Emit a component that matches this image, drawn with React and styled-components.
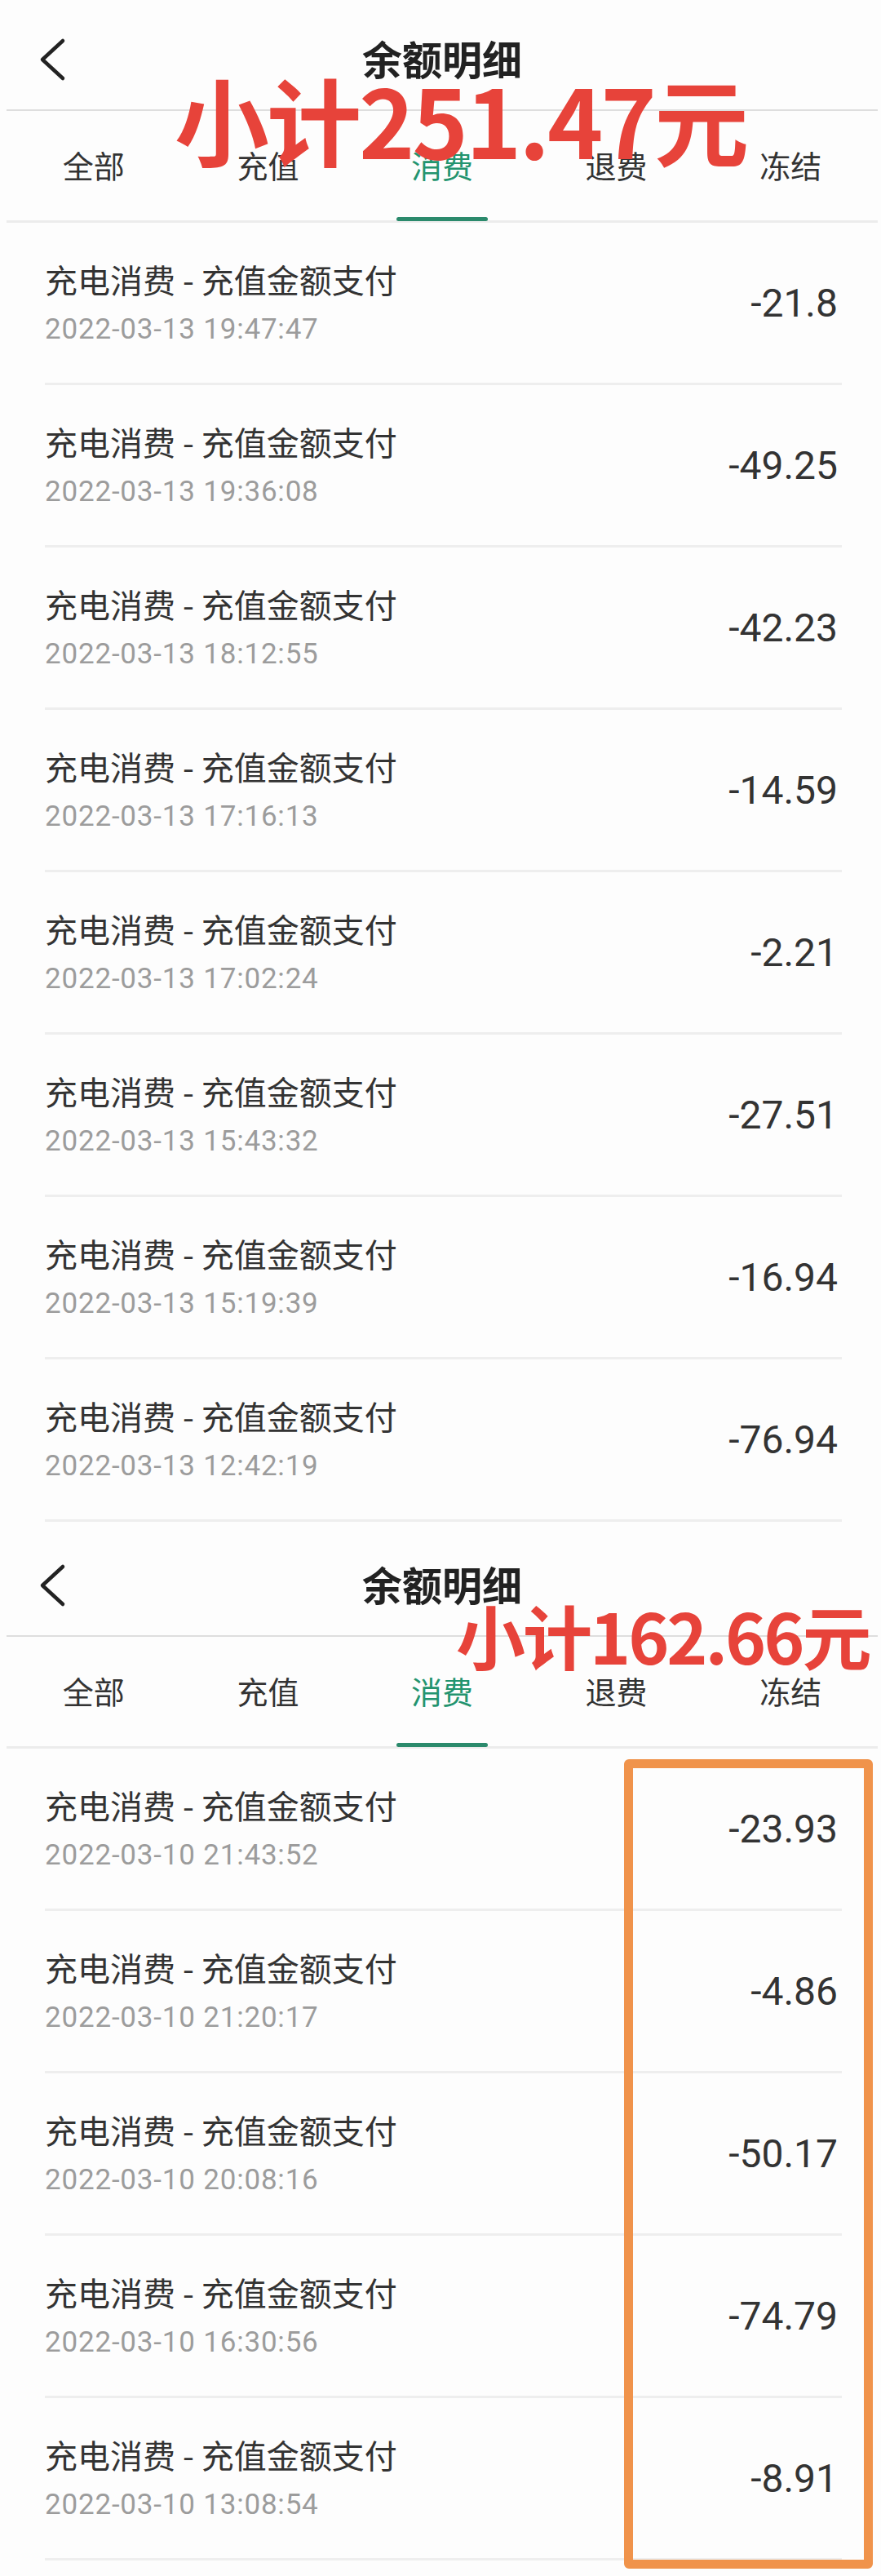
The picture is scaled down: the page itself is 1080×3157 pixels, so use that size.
import styled, { createGlobalStyle } from 'styled-components';

const GlobalStyle = createGlobalStyle`
    html, body {
        margin: 0;
        padding: 0;
        background: #fdfdfd;
    }
    * {
        box-sizing: border-box;
    }
`;

const CJK = `"Noto Sans CJK SC", "Noto Sans", sans-serif`;
const NUM = `Roboto, "Noto Sans CJK SC", sans-serif`;

const Page = styled.div`
    width: 1080px;
    min-height: 3157px;
    background: #fdfdfd;
    font-family: ${CJK};
    padding-bottom: 19px;
`;

const Panel = styled.section`
    position: relative;
    padding-bottom: ${({ $gap }) => $gap || 0}px;
`;

const NavBar = styled.header`
    position: relative;
    height: 136px;
    display: flex;
    align-items: center;
    justify-content: center;
    margin: 0 4px 0 8px;
    border-bottom: 2px solid #dedede;
`;

const BackBtn = styled.button`
    position: absolute;
    left: 40px;
    top: 45px;
    width: 34px;
    height: 56px;
    padding: 0;
    border: 0;
    background: none;
    display: flex;
`;

const NavTitle = styled.h1`
    margin: 6px 0 0;
    font-size: 49px;
    font-weight: 700;
    color: #222;
    line-height: 1;
`;

const TabBar = styled.nav`
    display: grid;
    grid-template-columns: repeat(5, 1fr);
    height: 137px;
    margin: 0 4px 0 8px;
    border-bottom: 3px solid #ececec;
`;

const Tab = styled.div`
    position: relative;
    display: flex;
    align-items: center;
    justify-content: center;
    padding-bottom: 3px;
    font-size: 38px;
    color: ${({ $active }) => ($active ? '#23946f' : '#333')};

    &::after {
        content: '';
        display: ${({ $active }) => ($active ? 'block' : 'none')};
        position: absolute;
        left: 50%;
        bottom: -1px;
        width: 112px;
        height: 5px;
        margin-left: -56px;
        border-radius: 3px;
        background: #2b8a6c;
    }
`;

const Row = styled.div`
    height: 199px;
    margin: 0 48px 0 55px;
    display: flex;
    align-items: center;
    justify-content: space-between;
    border-bottom: 3px solid #eeeeee;
`;

const Info = styled.div`
    display: flex;
    flex-direction: column;
`;

const RowTitle = styled.div`
    font-size: 40px;
    line-height: 52px;
    color: #333;
`;

const RowDate = styled.div`
    margin-top: 14px;
    font-family: ${NUM};
    font-size: 35px;
    line-height: 44px;
    letter-spacing: 0.8px;
    color: #9c9c9c;
`;

const Amount = styled.div`
    padding-right: 5px;
    font-family: ${NUM};
    font-size: 48px;
    color: #333;
`;

const Subtotal = styled.div`
    position: absolute;
    left: ${({ $x }) => $x}px;
    top: ${({ $y }) => $y}px;
    font-family: ${CJK};
    font-weight: 700;
    font-size: ${({ $size }) => $size}px;
    line-height: 1;
    color: #e7433a;
    white-space: nowrap;
    letter-spacing: -3px;
    pointer-events: none;
`;

const Highlight = styled.div`
    position: absolute;
    left: 765px;
    top: 286px;
    width: 305px;
    height: 992px;
    border: 11px solid #f0934b;
    border-radius: 6px;
    pointer-events: none;
`;

const TABS = ['全部', '充值', '消费', '退费', '冻结'];

const FIRST = [
    ['2022-03-13 19:47:47', '-21.8'],
    ['2022-03-13 19:36:08', '-49.25'],
    ['2022-03-13 18:12:55', '-42.23'],
    ['2022-03-13 17:16:13', '-14.59'],
    ['2022-03-13 17:02:24', '-2.21'],
    ['2022-03-13 15:43:32', '-27.51'],
    ['2022-03-13 15:19:39', '-16.94'],
    ['2022-03-13 12:42:19', '-76.94'],
];

const SECOND = [
    ['2022-03-10 21:43:52', '-23.93'],
    ['2022-03-10 21:20:17', '-4.86'],
    ['2022-03-10 20:08:16', '-50.17'],
    ['2022-03-10 16:30:56', '-74.79'],
    ['2022-03-10 13:08:54', '-8.91'],
];

function BackIcon() {
    return (
        <svg width="34" height="56" viewBox="0 0 34 56">
            <path
                d="M29 5 L4 28 L29 51"
                fill="none"
                stroke="#222"
                strokeWidth="4.5"
                strokeLinecap="round"
                strokeLinejoin="round"
            />
        </svg>
    );
}

function Ledger({ items, gap, children }) {
    return (
        <Panel $gap={gap}>
            <NavBar>
                <BackBtn aria-label="返回">
                    <BackIcon />
                </BackBtn>
                <NavTitle>余额明细</NavTitle>
            </NavBar>
            <TabBar>
                {TABS.map((t) => (
                    <Tab key={t} $active={t === '消费'}>
                        {t}
                    </Tab>
                ))}
            </TabBar>
            {items.map(([date, amount]) => (
                <Row key={date}>
                    <Info>
                        <RowTitle>充电消费 - 充值金额支付</RowTitle>
                        <RowDate>{date}</RowDate>
                    </Info>
                    <Amount>{amount}</Amount>
                </Row>
            ))}
            {children}
        </Panel>
    );
}

export default function App() {
    return (
        <Page>
            <GlobalStyle />
            <Ledger items={FIRST} gap={5}>
                <Subtotal $x={214} $y={86} $size={116}>
                    小计251.47元
                </Subtotal>
            </Ledger>
            <Ledger items={SECOND}>
                <Subtotal $x={559} $y={90} $size={85}>
                    小计162.66元
                </Subtotal>
                <Highlight />
            </Ledger>
        </Page>
    );
}
